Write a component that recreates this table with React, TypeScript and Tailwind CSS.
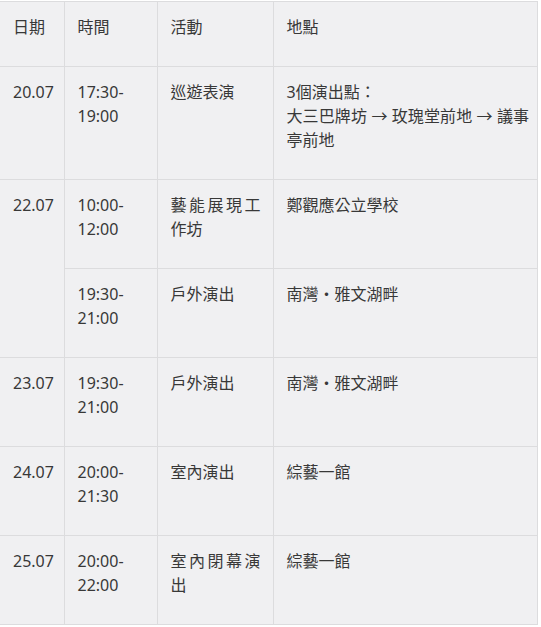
const font = { fontFamily: '"Noto Sans", "Noto Sans CJK TC", sans-serif' }

const cell = "border border-[#dcdcde] align-top pl-[13px] pr-[12px] pt-[13px] pb-[27px] text-justify"

export default function App() {
  return (
    <div className="w-[541px] h-[627px] bg-white pt-px" style={font}>
      <table className="border-collapse bg-[#f0f0f2] text-[16px] leading-[24px] text-[#383838] w-[538px] table-fixed">
        <colgroup>
          <col className="w-[64px]" />
          <col className="w-[93px]" />
          <col className="w-[116px]" />
          <col />
        </colgroup>
        <thead>
          <tr>
            <th className={`${cell} font-normal text-left border-l-0`}>日期</th>
            <th className={`${cell} font-normal text-left`}>時間</th>
            <th className={`${cell} font-normal text-left`}>活動</th>
            <th className={`${cell} font-normal text-left`}>地點</th>
          </tr>
        </thead>
        <tbody>
          <tr>
            <td className={`${cell} border-l-0`}>20.07</td>
            <td className={cell}>17:30-<br />19:00</td>
            <td className={cell}>巡遊表演</td>
            <td className={`${cell} !pr-[8px]`}>3個演出點：<br />大三巴牌坊 → 玫瑰堂前地 → 議事亭前地</td>
          </tr>
          <tr>
            <td className={`${cell} border-l-0`} rowSpan={2}>22.07</td>
            <td className={cell}>10:00-<br />12:00</td>
            <td className={cell}>藝能展現工作坊</td>
            <td className={cell}>鄭觀應公立學校</td>
          </tr>
          <tr>
            <td className={cell}>19:30-<br />21:00</td>
            <td className={cell}>戶外演出</td>
            <td className={cell}>南灣・雅文湖畔</td>
          </tr>
          <tr>
            <td className={`${cell} border-l-0`}>23.07</td>
            <td className={cell}>19:30-<br />21:00</td>
            <td className={cell}>戶外演出</td>
            <td className={cell}>南灣・雅文湖畔</td>
          </tr>
          <tr>
            <td className={`${cell} border-l-0`}>24.07</td>
            <td className={cell}>20:00-<br />21:30</td>
            <td className={cell}>室內演出</td>
            <td className={cell}>綜藝一館</td>
          </tr>
          <tr>
            <td className={`${cell} border-l-0`}>25.07</td>
            <td className={cell}>20:00-<br />22:00</td>
            <td className={cell}>室內閉幕演出</td>
            <td className={cell}>綜藝一館</td>
          </tr>
        </tbody>
      </table>
    </div>
  )
}
